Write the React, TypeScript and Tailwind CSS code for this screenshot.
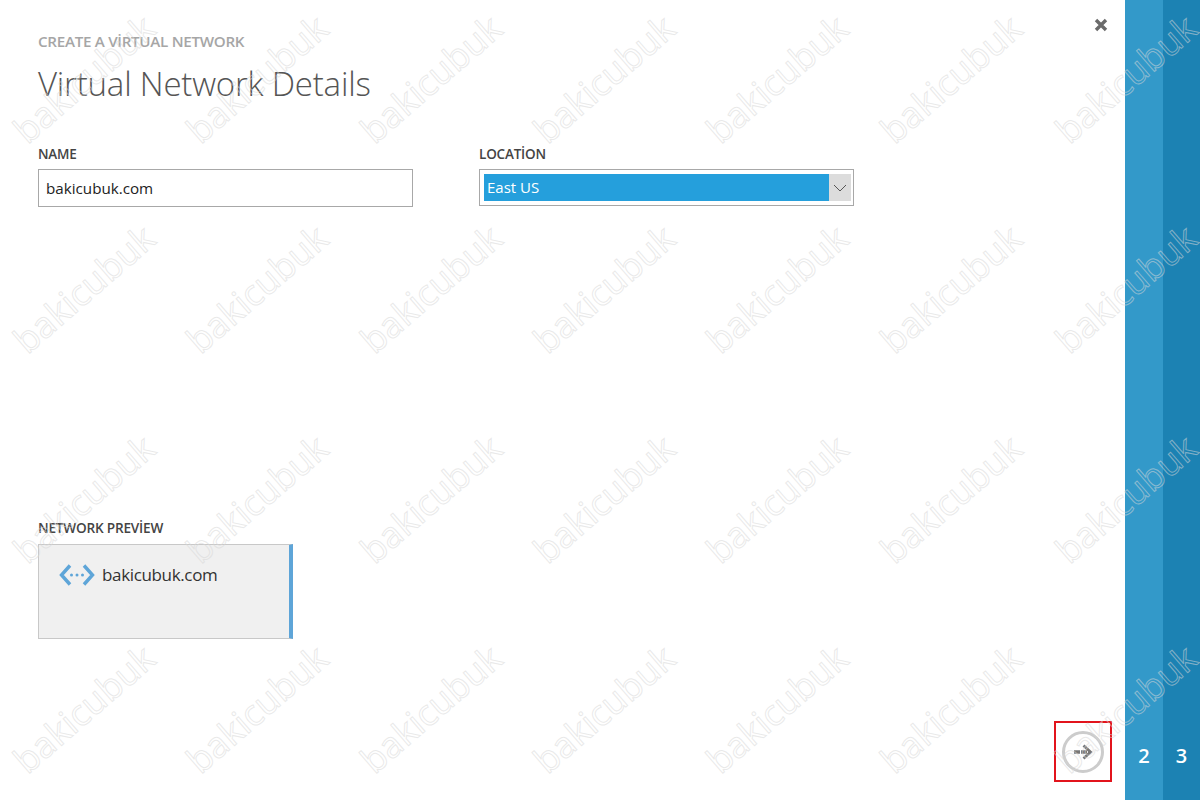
const COLUMNS = [84, 257, 431, 604, 777, 951, 1126];
const ROWS = [79, 289, 499, 709];

const Watermark = ({ x, y }: { x: number; y: number }) => (
	<span
		className="absolute -translate-x-1/2 -translate-y-1/2 -rotate-[41deg] text-[36px] leading-none text-transparent [-webkit-text-stroke:1px_rgba(215,215,215,0.55)] whitespace-nowrap"
		style={{ left: x, top: y }}
	>
		bakicubuk
	</span>
);

const NetworkIcon = () => (
	<svg width="36" height="22" viewBox="0 0 36 22" fill="none" stroke="#5ea5d8" strokeWidth="3.4">
		<path d="M11 1.5 L2.5 11 L11 20.5" />
		<path d="M25 1.5 L33.5 11 L25 20.5" />
		<circle cx="12.5" cy="11" r="1.5" fill="#5ea5d8" stroke="none" />
		<circle cx="18" cy="11" r="1.5" fill="#5ea5d8" stroke="none" />
		<circle cx="23.5" cy="11" r="1.5" fill="#5ea5d8" stroke="none" />
	</svg>
);

export default function App() {
	return (
		<div className="relative flex h-[800px] w-[1200px] overflow-hidden bg-white font-['Open_Sans',sans-serif]">
			<main className="relative flex-1 flex flex-col pl-[38px]">
				<p className="mt-[32px] text-[15.2px] leading-[18px] font-semibold text-[#a6a6a6] tracking-[-0.3px]">
					CREATE A VİRTUAL NETWORK
				</p>
				<h1 className="mt-[11px] text-[33px] leading-[46px] font-light text-[#555555] tracking-[-0.2px]">
					Virtual Network Details
				</h1>

				<div className="mt-[38px] flex gap-[66px]">
					<div className="w-[375px]">
						<label className="block text-[13.5px] leading-[18px] font-semibold text-[#444444] tracking-[-0.2px]">
							NAME
						</label>
						<div className="mt-[6px] flex h-[38px] items-center border border-[#a8a8a8] pl-[7px] text-[15.2px] text-[#222222]">
							bakicubuk.com
						</div>
					</div>
					<div className="w-[375px]">
						<label className="block text-[13.5px] leading-[18px] font-semibold text-[#444444] tracking-[-0.2px]">
							LOCATİON
						</label>
						<div className="mt-[6px] flex h-[37px] items-stretch border border-[#a8a8a8] p-[4px] pr-[2px]">
							<div className="flex flex-1 items-center bg-[#259fdc] pl-[3px] text-[15px] text-white">
								East US
							</div>
							<div className="flex w-[22px] items-center justify-center bg-[#dcdcdc]">
								<svg width="14" height="8" viewBox="0 0 14 8" fill="none" stroke="#555555" strokeWidth="1">
									<path d="M1 1 L7 7 L13 1" />
								</svg>
							</div>
						</div>
					</div>
				</div>

				<label className="mt-[312px] block text-[13.6px] leading-[18px] font-semibold text-[#444444] tracking-[-0.2px]">
					NETWORK PREVİEW
				</label>
				<div className="mt-[7px] flex h-[95px] w-[255px] items-start gap-[7px] border border-[#c8c8c8] border-r-4 border-r-[#5ea5d8] bg-[#f0f0f0] pl-[20px] pt-[19px]">
					<NetworkIcon />
					<span className="text-[17px] leading-[22px] text-[#333333] tracking-[-0.35px]">bakicubuk.com</span>
				</div>

				<button className="absolute right-[17px] top-[18px] text-[#6b6b6b]">
					<svg width="14" height="14" viewBox="0 0 14 14" fill="none" stroke="currentColor" strokeWidth="3.4">
						<path d="M2 2 L12 12 M12 2 L2 12" />
					</svg>
				</button>

				<div className="absolute right-[13px] top-[721px] flex h-[61px] w-[58px] items-center justify-center border-2 border-[#e2141c]">
					<div className="flex h-[42px] w-[42px] items-center justify-center rounded-full border-[3px] border-[#cccccc]">
						<svg width="20" height="16" viewBox="0 0 20 16" fill="none" stroke="#777777">
							<path d="M1 8 H17" strokeWidth="3.4" strokeDasharray="6 1" />
							<path d="M10.5 1.5 L17.5 8 L10.5 14.5" strokeWidth="2.8" />
						</svg>
					</div>
				</div>
			</main>

			<aside className="flex w-[75px] shrink-0 text-white text-[20px] font-semibold">
				<div className="flex w-[38px] items-end justify-center bg-[#3399c9] pb-[30px]">
					<span className="leading-[28px]">2</span>
				</div>
				<div className="flex w-[37px] items-end justify-center bg-[#1c82b3] pb-[30px]">
					<span className="leading-[28px]">3</span>
				</div>
			</aside>

			<div className="pointer-events-none absolute inset-0">
				{ROWS.flatMap((y) => COLUMNS.map((x) => <Watermark key={`${x}-${y}`} x={x} y={y} />))}
			</div>
		</div>
	);
}
